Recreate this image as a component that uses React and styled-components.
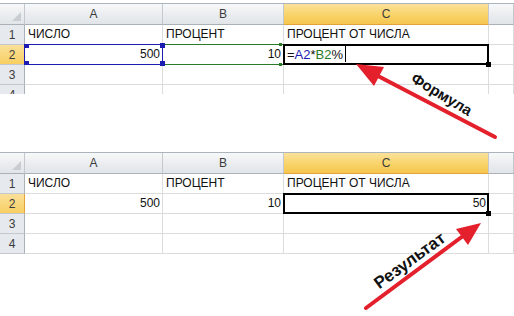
import React from "react";
import styled, { createGlobalStyle } from "styled-components";

const GlobalStyle = createGlobalStyle`
  html, body {
    margin: 0;
    padding: 0;
    background: #fff;
  }
  body {
    font-family: "Liberation Sans", Arial, sans-serif;
  }
`;

const Page = styled.div`
  position: relative;
  width: 514px;
  height: 316px;
  overflow: hidden;
  background: #fff;
  display: flex;
  flex-direction: column;
`;

const Sheet = styled.div`
  display: grid;
  grid-template-columns: 25px 138px 121px 205px 1fr;
  grid-template-rows: 21px;
  grid-auto-rows: 20px;
  margin-top: ${(p) => p.$top}px;
  height: ${(p) => p.$height}px;
  overflow: hidden;
  border-top: 1px solid #aeb4bb;
  flex-shrink: 0;
`;

const Head = styled.div`
  display: flex;
  align-items: center;
  justify-content: center;
  font-size: 12px;
  color: #3b3b3b;
  border-right: 1px solid #c3c8ce;
  border-bottom: 1px solid #aab1b9;
  background: ${(p) =>
    p.$active
      ? "linear-gradient(#fbe29a, #f8d265 60%, #f5c550)"
      : "linear-gradient(#f7f8f9, #e9ecef 60%, #e1e5e9)"};
  ${(p) => p.$active && "border-bottom: 1px solid #e2a43a;"}
`;

const Corner = styled(Head)`
  position: relative;
  &::after {
    content: "";
    position: absolute;
    right: 3px;
    bottom: 3px;
    width: 0;
    height: 0;
    border-left: 9px solid transparent;
    border-bottom: 9px solid #c9cdd2;
  }
`;

const RowHead = styled.div`
  display: flex;
  align-items: center;
  justify-content: center;
  font-size: 12px;
  color: #3b3b3b;
  border-right: 1px solid #aab1b9;
  border-bottom: 1px solid #c3c8ce;
  background: ${(p) =>
    p.$active ? "linear-gradient(#fbe09a, #f7cf62)" : "#e6e9ed"};
  ${(p) => p.$active && "border-right: 1px solid #e2a43a;"}
`;

const Cell = styled.div`
  position: relative;
  display: flex;
  align-items: flex-end;
  justify-content: ${(p) => (p.$right ? "flex-end" : "flex-start")};
  padding: 0 2px 2px 3px;
  font-size: 12px;
  line-height: 15px;
  color: #111;
  white-space: nowrap;
  border-right: 1px solid #dadcdd;
  border-bottom: 1px solid #dadcdd;
`;

const Frame = styled.div`
  position: absolute;
  top: -1px;
  left: -1px;
  right: -1px;
  bottom: -1px;
  border: ${(p) => p.$w}px solid ${(p) => p.$color};
  ${(p) => p.$noLeft && "border-left: none;"}
  z-index: 2;
  pointer-events: none;
`;

const Dot = styled.span`
  position: absolute;
  width: ${(p) => p.$size}px;
  height: ${(p) => p.$size}px;
  background: ${(p) => p.$color};
  ${(p) => p.$pos};
  z-index: 3;
`;

const Formula = styled.span`
  font-size: 13px;
`;

const Ref = styled.span`
  color: ${(p) => p.$color};
`;

const Caret = styled.span`
  display: inline-block;
  width: 1px;
  height: 17px;
  margin-left: 2px;
  background: #000;
  vertical-align: -3px;
`;

const Overlay = styled.svg`
  position: absolute;
  left: 0;
  top: 0;
  pointer-events: none;
  z-index: 5;
`;

const Label = styled.span`
  position: absolute;
  left: ${(p) => p.$x}px;
  top: ${(p) => p.$y}px;
  transform: translate(-50%, -50%) rotate(${(p) => p.$angle}deg);
  font-family: "Liberation Sans", Arial, sans-serif;
  font-weight: 700;
  font-size: ${(p) => p.$size}px;
  color: #111;
  white-space: nowrap;
  z-index: 6;
`;

const columns = ["A", "B", "C", "D"];

function Header({ active }) {
  return (
    <>
      <Corner />
      {columns.map((c) => (
        <Head key={c} $active={c === active}>
          {c === "D" ? "" : c}
        </Head>
      ))}
    </>
  );
}

function Row({ n, active, children }) {
  return (
    <>
      <RowHead $active={active}>{n}</RowHead>
      {children}
    </>
  );
}

function EmptyCells() {
  return columns.map((c) => <Cell key={c} />);
}

function TitleRow() {
  return (
    <Row n={1}>
      <Cell>ЧИСЛО</Cell>
      <Cell>ПРОЦЕНТ</Cell>
      <Cell>ПРОЦЕНТ ОТ ЧИСЛА</Cell>
      <Cell />
    </Row>
  );
}

const blue = "#1c1cb0";
const green = "#2a7a2a";

function FormulaSheet() {
  return (
    <Sheet $top={3} $height={90}>
      <Header active="C" />
      <TitleRow />
      <Row n={2} active>
        <Cell $right>
          500
          <Frame $w={1} $color={blue} />
          <Dot $size={4} $color={blue} $pos="left: 0; top: -1px;" />
          <Dot $size={4} $color={blue} $pos="left: 0; bottom: -1px;" />
          <Dot $size={5} $color={blue} $pos="right: -3px; top: -2px;" />
          <Dot $size={5} $color={blue} $pos="right: -3px; bottom: -2px;" />
        </Cell>
        <Cell $right>
          10
          <Frame $w={1} $color={green} $noLeft />
          <Dot $size={3} $color={green} $pos="right: 1px; top: -2px;" />
          <Dot $size={3} $color={green} $pos="right: 1px; bottom: -2px;" />
        </Cell>
        <Cell>
          <Formula>
            =<Ref $color={blue}>A2</Ref>*<Ref $color={green}>B2</Ref>%
            <Caret />
          </Formula>
          <Frame $w={2} $color="#000" />
          <Dot $size={5} $color="#000" $pos="right: -3px; bottom: -3px;" />
        </Cell>
        <Cell />
      </Row>
      <Row n={3}>
        <EmptyCells />
      </Row>
      <Row n={4}>
        <EmptyCells />
      </Row>
    </Sheet>
  );
}

function ResultSheet() {
  return (
    <Sheet $top={58} $height={102}>
      <Header active="C" />
      <TitleRow />
      <Row n={2} active>
        <Cell $right>500</Cell>
        <Cell $right>10</Cell>
        <Cell $right>
          50
          <Frame $w={2} $color="#000" />
          <Dot $size={5} $color="#000" $pos="right: -3px; bottom: -3px;" />
        </Cell>
        <Cell />
      </Row>
      <Row n={3}>
        <EmptyCells />
      </Row>
      <Row n={4}>
        <EmptyCells />
      </Row>
    </Sheet>
  );
}

function Arrows() {
  const red = "#e3202b";
  return (
    <Overlay width="514" height="316" viewBox="0 0 514 316">
      <line x1="495" y1="137" x2="378" y2="76" stroke={red} strokeWidth="4" strokeLinecap="round" />
      <polygon points="356,64 384,67 374,86" fill={red} />
      <line x1="366" y1="308" x2="463" y2="236" stroke={red} strokeWidth="4" strokeLinecap="round" />
      <polygon points="481,223 468,245 456,229" fill={red} />
    </Overlay>
  );
}

export default function App() {
  return (
    <Page>
      <GlobalStyle />
      <FormulaSheet />
      <ResultSheet />
      <Arrows />
      <Label $x={442} $y={94} $angle={31} $size={15}>
        Формула
      </Label>
      <Label $x={410} $y={261} $angle={-36} $size={17}>
        Результат
      </Label>
    </Page>
  );
}
